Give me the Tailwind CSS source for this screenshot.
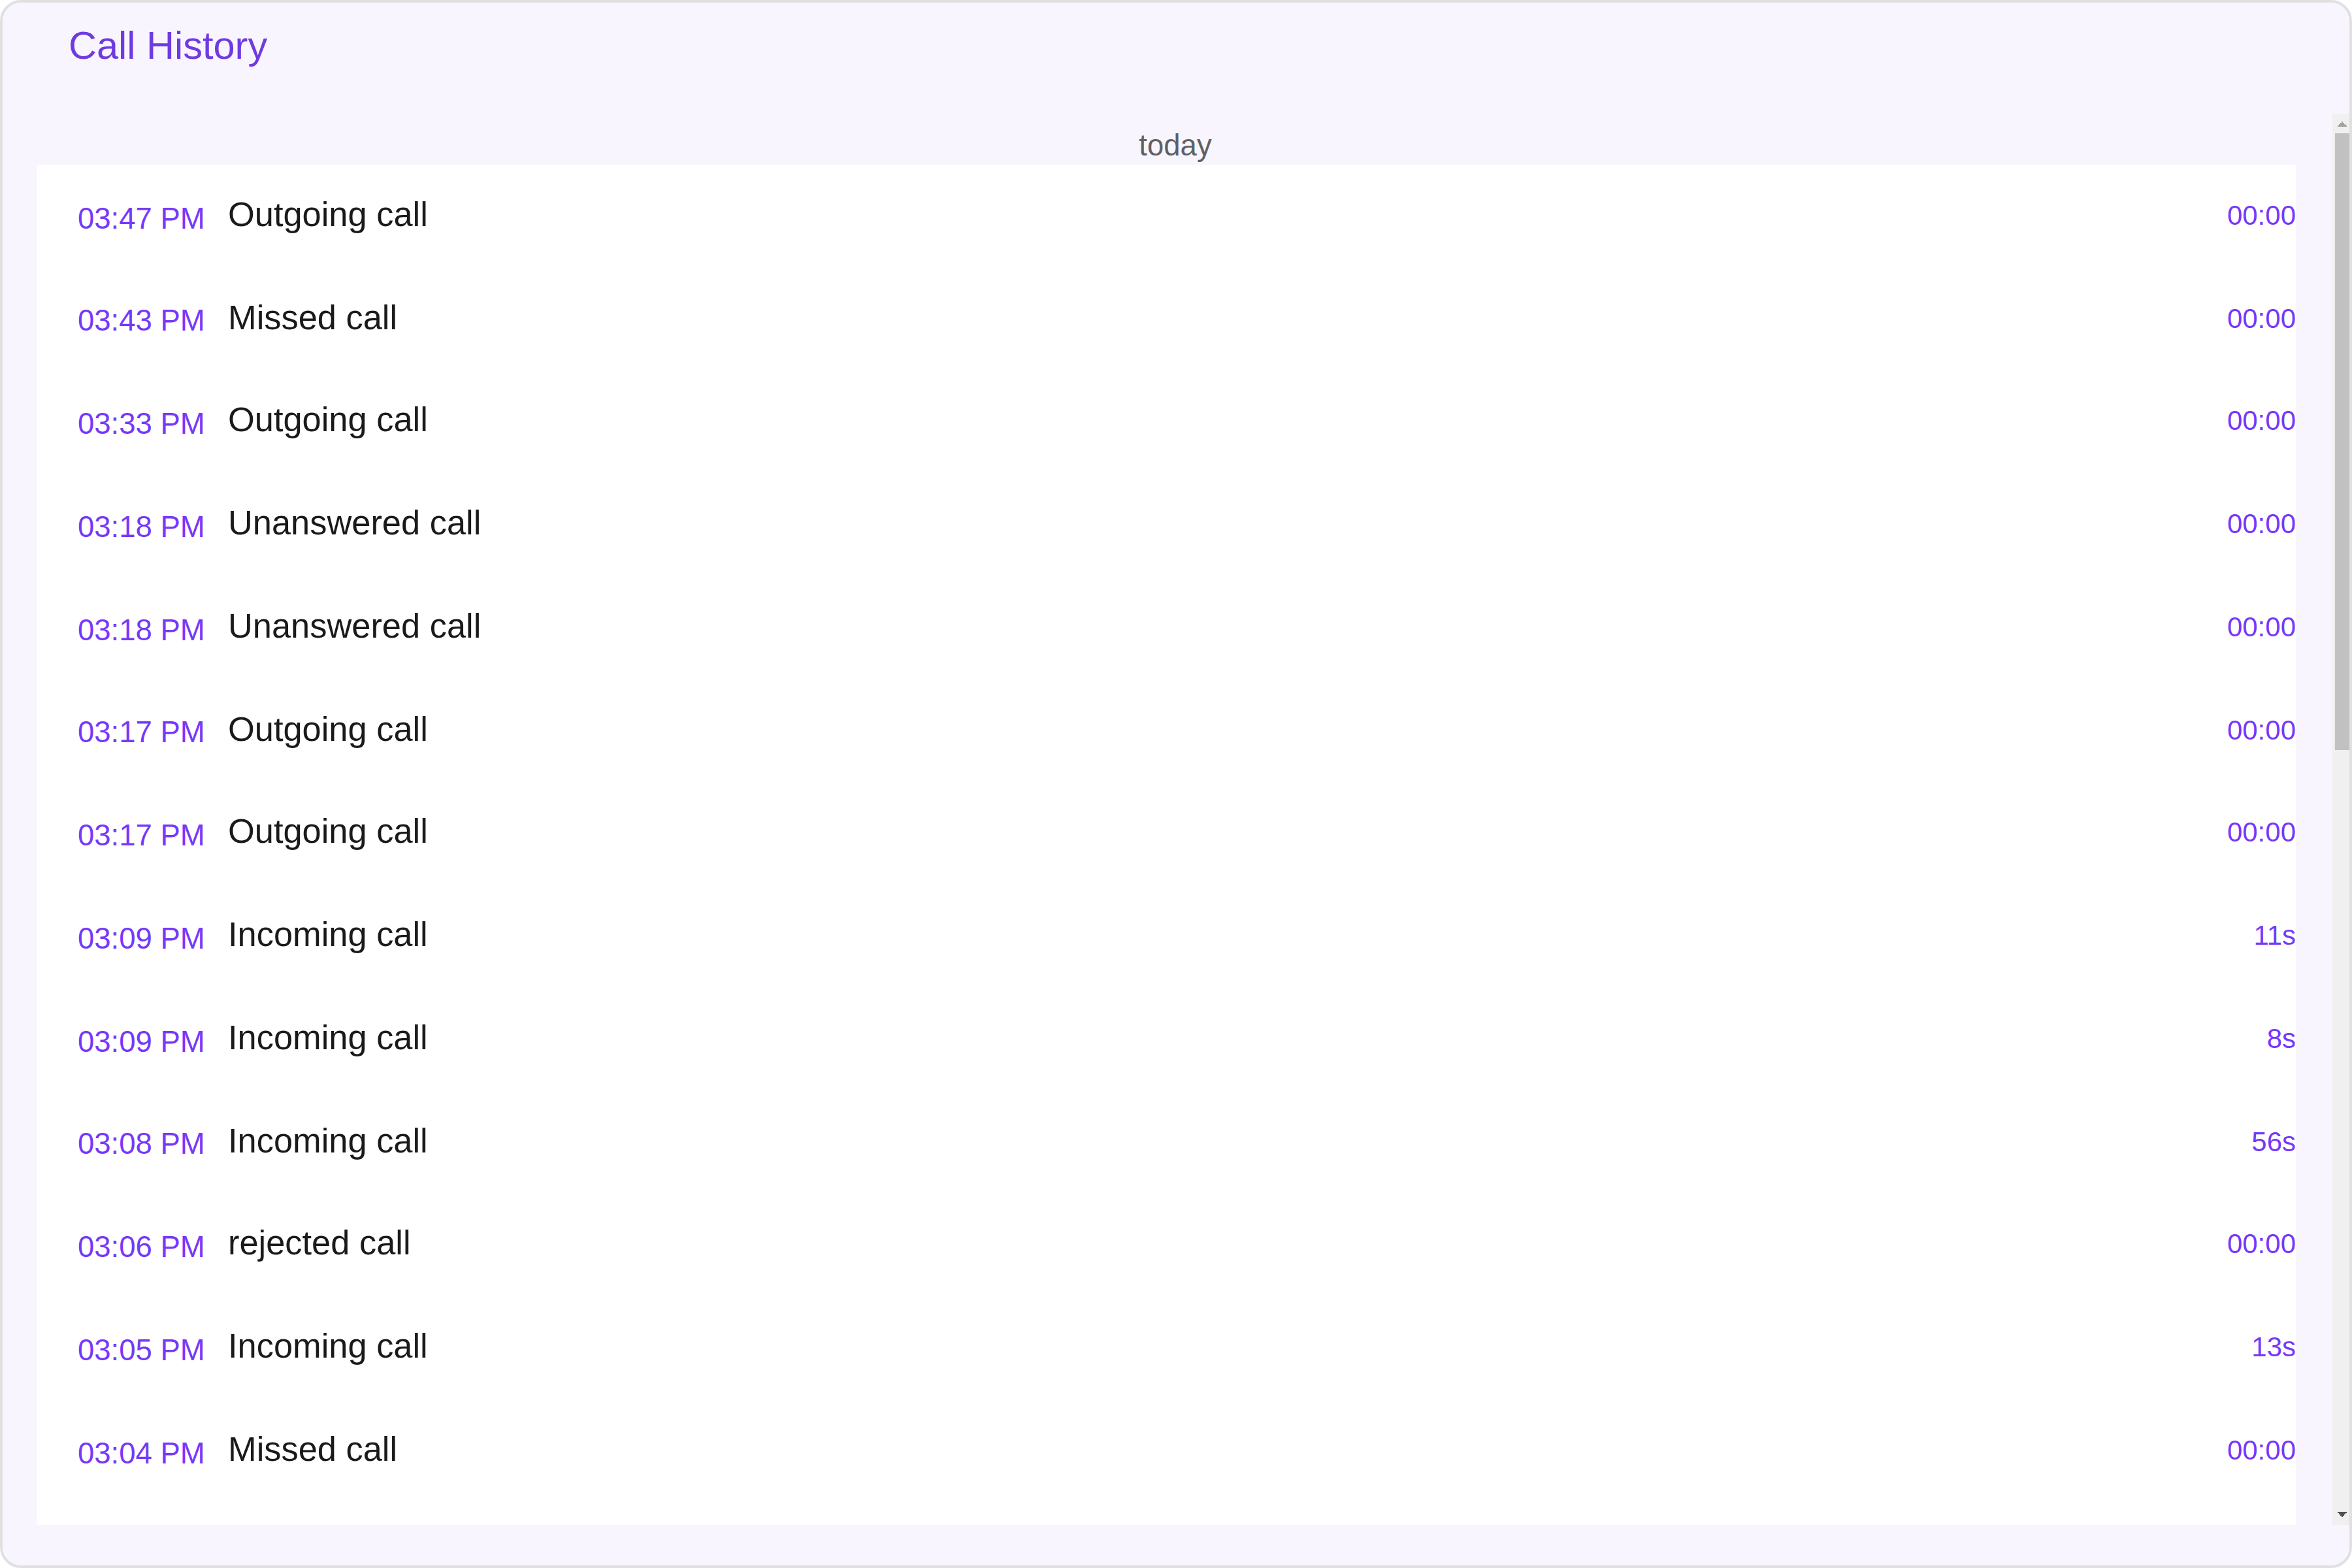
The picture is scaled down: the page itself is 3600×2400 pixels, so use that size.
<!DOCTYPE html>
<html lang="en">
<head>
<meta charset="utf-8">
<title>Call History</title>
<script src="https://cdn.jsdelivr.net/npm/@tailwindcss/browser@4"></script>
</head>
<body class="bg-white">
<main class="flex flex-col w-[3600px] h-[2400px] border-4 border-[#e0e0e0] rounded-[32px] bg-[#f8f5ff] overflow-hidden font-['Liberation_Sans',sans-serif]">
  <header class="h-[170px] shrink-0 pl-[101px] pt-[30px]">
    <h1 class="text-[59.5px] leading-[71px] text-[#6f3be0]">Call History</h1>
  </header>
  <div class="flex h-[2160px] shrink-0">
    <section class="flex-1 pl-[52px] pr-14">
      <h2 class="h-[78px] pt-[22px] pl-[28px] text-center text-[45.5px] leading-[53px] text-[#606060]">today</h2>
      <ul id="calls" class="h-[2082px] bg-white overflow-hidden"></ul>
    </section>
    <div class="flex flex-col w-[26px] bg-[#f0f0f0]">
      <svg class="w-[26px] h-[30px] shrink-0" viewBox="0 0 26 30" shape-rendering="crispEdges" fill="#a3a3a3"><path d="M14 12h2v2h2v2h2v2h2v2H8v-2h2v-2h2v-2h2z"/></svg>
      <div class="ml-1 h-[944px] bg-[#c1c1c1]"></div>
      <svg class="mt-auto w-[26px] h-[30px] shrink-0" viewBox="0 0 26 30" shape-rendering="crispEdges" fill="#505050"><path d="M8 10h14v2h-2v2h-2v2h-2v2h-2v-2h-2v-2h-2v-2H8z"/></svg>
    </div>
  </div>
</main>
<script>
const calls = [
  ['03:47 PM', 'Outgoing call', '00:00'],
  ['03:43 PM', 'Missed call', '00:00'],
  ['03:33 PM', 'Outgoing call', '00:00'],
  ['03:18 PM', 'Unanswered call', '00:00'],
  ['03:18 PM', 'Unanswered call', '00:00'],
  ['03:17 PM', 'Outgoing call', '00:00'],
  ['03:17 PM', 'Outgoing call', '00:00'],
  ['03:09 PM', 'Incoming call', '11s'],
  ['03:09 PM', 'Incoming call', '8s'],
  ['03:08 PM', 'Incoming call', '56s'],
  ['03:06 PM', 'rejected call', '00:00'],
  ['03:05 PM', 'Incoming call', '13s'],
  ['03:04 PM', 'Missed call', '00:00'],
];
// Rows average 157.5px; every fourth one is 2px shorter.
document.getElementById('calls').innerHTML = calls.map(([time, kind, length], i) => `
  <li class="flex items-start pl-[63px] ${i % 4 === 1 ? 'h-[156px]' : 'h-[158px]'}">
    <span class="w-[230px] text-[45.5px] leading-[53px] text-[#7638fa] ${i % 4 === 1 ? 'pt-[54px]' : 'pt-[56px]'}">${time}</span>
    <span class="flex-1 pt-[46px] text-[52.4px] leading-[60px] text-[#1a1a1a]">${kind}</span>
    <span class="pt-[54px] text-[42px] leading-[47px] text-[#7638fa]">${length}</span>
  </li>`).join('');
</script>
</body>
</html>
